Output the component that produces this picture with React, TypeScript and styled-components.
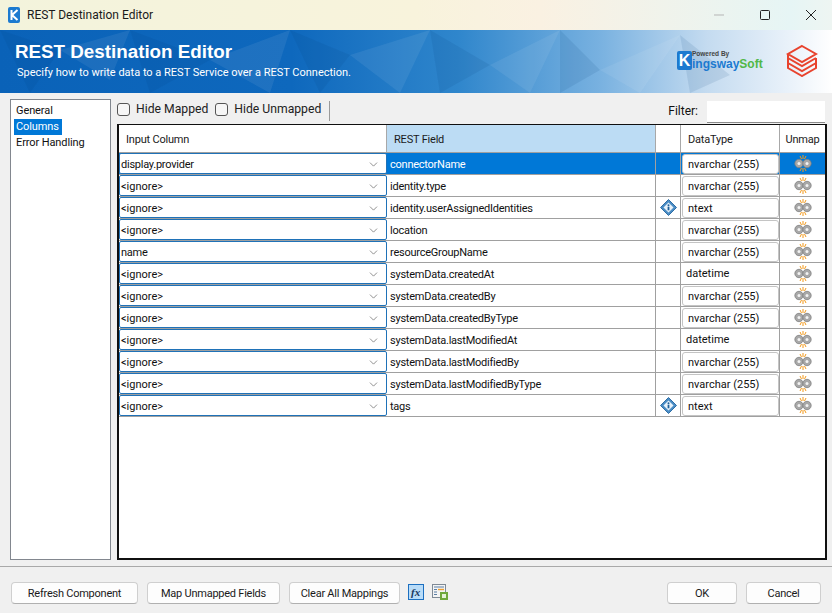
import React from "react";
import styled, { createGlobalStyle } from "styled-components";
import { ChevronDown } from "lucide-react";

const GlobalStyle = createGlobalStyle`
  html, body {
    margin: 0;
    padding: 0;
    background: #f0f0f0;
  }
  * {
    box-sizing: border-box;
  }
`;

const COLUMNS = "268px 269px 25px 99px 46px";

const Window = styled.div`
  width: 832px;
  height: 613px;
  display: flex;
  flex-direction: column;
  overflow: hidden;
  font-family: Roboto, "Liberation Sans", sans-serif;
  font-size: 11px;
  color: #111;
  background: #f0f0f0;
`;

const TitleBar = styled.div`
  height: 30px;
  flex: none;
  display: flex;
  align-items: center;
  padding-left: 7px;
  background: linear-gradient(90deg, #f3f3dc 0%, #f8f3dc 50%, #faf1e2 65%, #e6f5f5 95%, #eef5f2 100%);
`;

const TitleText = styled.span`
  margin-left: 5px;
  font-size: 12px;
  color: #1a1a1a;
`;

const WindowButtons = styled.div`
  margin-left: auto;
  margin-right: -2px;
  display: flex;
  align-items: center;
`;

const WindowButton = styled.div`
  width: 46px;
  height: 30px;
  display: flex;
  align-items: center;
  justify-content: center;
`;

const Banner = styled.div`
  height: 63px;
  flex: none;
  position: relative;
  overflow: hidden;
  background: linear-gradient(90deg, #0a62b8 0%, #0e68bd 35%, #2f86cc 55%, #78b1e0 72%, #c4dbf0 85%, #eaf2fa 95%, #ffffff 100%);
`;

const BannerTexture = styled.svg`
  position: absolute;
  inset: 0;
`;

const BannerText = styled.div`
  position: relative;
  padding: 11px 0 0 15px;
  color: #fff;
`;

const BannerTitle = styled.div`
  font-family: "Liberation Sans", Arial, sans-serif;
  font-size: 18.8px;
  font-weight: 700;
  line-height: 21px;
`;

const BannerSub = styled.div`
  margin: 3px 0 0 2px;
  font-size: 11px;
  line-height: 15px;
`;

const BannerLogos = styled.div`
  position: absolute;
  top: 14px;
  left: 677px;
  display: flex;
  align-items: center;
  gap: 23px;
`;

const KingswayLogo = styled.div`
  width: 86px;
  height: 27px;
  position: relative;
  display: flex;
  align-items: flex-end;
`;

const KBadge = styled.div`
  width: 15px;
  height: 19px;
  background: #1c7ad0;
  border-radius: 2px;
  color: #fff;
  font: 700 16px/19px "Liberation Sans", sans-serif;
  text-align: center;
  position: absolute;
  left: 0;
  top: 4px;
`;

const PoweredBy = styled.span`
  position: absolute;
  left: 15px;
  top: 3px;
  font: 700 6.5px/8px "Liberation Sans", sans-serif;
  color: #444;
`;

const KingswayName = styled.span`
  position: absolute;
  left: 15px;
  top: 10px;
  font: 700 12px/14px "Liberation Sans", sans-serif;
  color: #1c7ad0;
  white-space: nowrap;

  b {
    color: #52b848;
  }
`;

const Body = styled.div`
  flex: 1;
  display: flex;
  gap: 6px;
  padding: 6px 5px 6px 10px;
  border-bottom: 1px solid #a9a9a9;
`;

const TabList = styled.div`
  width: 101px;
  flex: none;
  background: #fff;
  border: 1px solid #82878f;
  padding: 3px 3px;
  display: flex;
  flex-direction: column;
  align-items: flex-start;
`;

const TabItem = styled.div<{ $active?: boolean }>`
  height: 16px;
  line-height: 15px;
  padding: 0 3px 0 2px;
  letter-spacing: -0.1px;
  background: ${(p) => (p.$active ? "#0078d7" : "transparent")};
  color: ${(p) => (p.$active ? "#fff" : "#111")};
`;

const MainPane = styled.div`
  flex: 1;
  min-width: 0;
  display: flex;
  flex-direction: column;
`;

const Toolbar = styled.div`
  height: 25px;
  flex: none;
  display: flex;
  align-items: flex-start;
`;

const CheckLabel = styled.label`
  height: 20px;
  display: flex;
  align-items: center;
  gap: 6px;
  margin-right: 7px;
  font-size: 12.2px;
  color: #222;
`;

const CheckBox = styled.span`
  width: 13px;
  height: 13px;
  border: 1px solid #555;
  border-radius: 3px;
  background: #f6f6f6;
`;

const ToolbarDivider = styled.div`
  width: 1px;
  height: 20px;
  margin: 2px 0 0 1px;
  background: #9a9a9a;
`;

const FilterLabel = styled.span`
  margin: 5px 9px 0 auto;
  font-size: 12px;
`;

const FilterInput = styled.div`
  width: 118px;
  height: 22px;
  margin: 2px 2px 0 0;
  background: #fff;
  border-bottom: 1px solid #8a8a8a;
`;

const Grid = styled.div`
  flex: 1;
  background: #fff;
  border: 2px solid #101010;
  border-top-width: 1px;
  overflow: hidden;
`;

const HeaderRow = styled.div`
  height: 28px;
  display: grid;
  grid-template-columns: ${COLUMNS};
  border-bottom: 1px solid #a0a0a0;
`;

const HeaderCell = styled.div<{ $selected?: boolean; $center?: boolean }>`
  display: flex;
  align-items: center;
  justify-content: ${(p) => (p.$center ? "center" : "flex-start")};
  padding: 1px ${(p) => (p.$center ? "1px" : "0")} 0 ${(p) => (p.$center ? "0" : "7px")};
  background: ${(p) => (p.$selected ? "#bcdcf4" : "#fff")};
  border-right: 1px solid #a8a8a8;
  letter-spacing: -0.2px;
  color: #1a1a1a;

  &:last-child {
    border-right: 0;
  }
`;

const Row = styled.div<{ $selected?: boolean }>`
  height: 22px;
  display: grid;
  grid-template-columns: ${COLUMNS};
  border-bottom: 1px solid #a0a0a0;
  background: ${(p) => (p.$selected ? "#0078d7" : "#fff")};
  color: ${(p) => (p.$selected ? "#fff" : "#111")};
`;

const Cell = styled.div`
  display: flex;
  align-items: center;
  justify-content: center;
  border-right: 1px solid #a0a0a0;
  min-width: 0;

  &:last-child {
    border-right: 0;
  }
`;

const ComboCell = styled.div`
  display: flex;
  align-items: center;
  justify-content: space-between;
  padding: 1px 6px 0 1px;
  background: #fff;
  color: #111;
  border: 1px solid #1f72b8;
  border-radius: 2px;
`;

const ComboText = styled.span<{ $tight?: boolean }>`
  letter-spacing: ${(p) => (p.$tight ? "-0.24px" : "0")};
`;

const FieldCell = styled.div`
  display: flex;
  align-items: center;
  padding: 1px 0 0 3px;
  letter-spacing: -0.24px;
  border-right: 1px solid #a0a0a0;
`;

const TypeCell = styled.div`
  display: flex;
  align-items: center;
  padding-left: 5px;
  border-right: 1px solid #a0a0a0;
  color: #111;
`;

const TypeBox = styled.div`
  width: 97px;
  height: 20px;
  margin-left: -4px;
  padding: 1px 0 0 5px;
  display: flex;
  align-items: center;
  background: #fff;
  color: #111;
  border: 1px solid #c4c4c4;
  border-radius: 3px;
`;

const Footer = styled.div`
  height: 46px;
  flex: none;
  display: flex;
  align-items: flex-start;
  padding: 15px 11px 0 11px;
`;

const FooterButton = styled.button<{ $width: number; $last?: boolean }>`
  width: ${(p) => p.$width}px;
  height: 22px;
  margin-right: ${(p) => (p.$last ? "0" : "9px")};
  padding: 0;
  background: #fdfdfd;
  border: 1px solid #cfcfcf;
  border-bottom-color: #b0b0b0;
  border-radius: 4px;
  font-family: inherit;
  font-size: 11px;
  letter-spacing: -0.24px;
  color: #1a1a1a;
`;

const FooterIcons = styled.div`
  display: flex;
  align-items: center;
  gap: 8px;
  margin: 2px 0 0 -1px;
`;

const FooterEnd = styled.div`
  margin-left: auto;
  display: flex;
`;

function WinIcon() {
  return (
    <svg width="15" height="17" viewBox="0 0 15 17">
      <rect x="1" y="0" width="12" height="16" rx="2" fill="#1c7ad0" />
      <path d="M4.5 3v10M10.5 3 5 8l5.5 5" stroke="#fff" strokeWidth="2" fill="none" />
    </svg>
  );
}

function StackLogo() {
  return (
    <svg width="32" height="33" viewBox="0 0 32 33" fill="none" stroke="#e8432e" strokeWidth="2">
      <path d="M16 2 30 10 16 18 2 10Z" />
      <path d="M2 10v4l14 8 14-8" />
      <path d="M2 14v5l14 8 14-8v-5" />
      <path d="M2 19v5l14 8 14-8v-5" />
    </svg>
  );
}

function InfoDiamond() {
  return (
    <svg width="17" height="17" viewBox="0 0 17 17">
      <path d="M8.5.5 16.5 8.5 8.5 16.5.5 8.5Z" fill="#4a8cc4" stroke="#2f6ea6" />
      <path d="M8.5 3.5 13.5 8.5 8.5 13.5 3.5 8.5Z" fill="#e8f2fa" />
      <circle cx="8.5" cy="6.2" r="1" fill="#1d5f9a" />
      <rect x="7.6" y="7.7" width="1.8" height="3.6" fill="#1d5f9a" />
    </svg>
  );
}

function UnmapIcon() {
  return (
    <svg width="18" height="17" viewBox="0 0 18 17">
      <g stroke="#f39a1c" strokeWidth="1">
        <path d="M9 0v4M6 1l1.5 3M12 1l-1.5 3M9 13v4M6 16l1.5-3M12 16l-1.5-3" />
      </g>
      <circle cx="5" cy="8.5" r="4.2" fill="#a8a8a8" stroke="#7a7a7a" strokeWidth=".7" />
      <circle cx="13" cy="8.5" r="4.2" fill="#a8a8a8" stroke="#7a7a7a" strokeWidth=".7" />
      <circle cx="5" cy="8.5" r="1.5" fill="#f2f2f2" />
      <circle cx="13" cy="8.5" r="1.5" fill="#f2f2f2" />
    </svg>
  );
}

function FxIcon() {
  return (
    <svg width="16" height="16" viewBox="0 0 16 16">
      <rect x=".5" y=".5" width="15" height="15" fill="#b9dcf8" stroke="#1c6fc0" />
      <text x="3" y="12" fontFamily="Liberation Serif, serif" fontStyle="italic" fontWeight="700" fontSize="11" fill="#17375e">
        fx
      </text>
    </svg>
  );
}

function TableIcon() {
  return (
    <svg width="16" height="16" viewBox="0 0 16 16">
      <rect x=".5" y=".5" width="13" height="13" fill="#f4f4f4" stroke="#7f8a96" />
      <path d="M2 3h10M2 5.5h3M2 8h3M2 10.5h3" stroke="#5b7fa6" strokeWidth="1" />
      <path d="M6 5.5h6" stroke="#f0a030" strokeWidth="1.4" />
      <rect x="8" y="8" width="8" height="8" fill="#6fa83c" />
      <rect x="10" y="10" width="4" height="4" fill="#e5f2d8" />
    </svg>
  );
}

const rows = [
  { input: "display.provider", field: "connectorName", type: "nvarchar (255)", selected: true },
  { input: "<ignore>", field: "identity.type", type: "nvarchar (255)" },
  { input: "<ignore>", field: "identity.userAssignedIdentities", type: "ntext", info: true },
  { input: "<ignore>", field: "location", type: "nvarchar (255)" },
  { input: "name", field: "resourceGroupName", type: "nvarchar (255)" },
  { input: "<ignore>", field: "systemData.createdAt", type: "datetime", plain: true },
  { input: "<ignore>", field: "systemData.createdBy", type: "nvarchar (255)" },
  { input: "<ignore>", field: "systemData.createdByType", type: "nvarchar (255)" },
  { input: "<ignore>", field: "systemData.lastModifiedAt", type: "datetime", plain: true },
  { input: "<ignore>", field: "systemData.lastModifiedBy", type: "nvarchar (255)" },
  { input: "<ignore>", field: "systemData.lastModifiedByType", type: "nvarchar (255)" },
  { input: "<ignore>", field: "tags", type: "ntext", info: true },
];

const facets = [
  "0,0 60,20 30,63", "60,20 130,0 110,50", "130,0 210,30 150,63", "210,30 290,0 270,63",
  "290,0 350,25 320,63", "350,25 430,0 400,63", "430,0 490,35 440,63", "490,35 560,0 530,63",
  "560,0 600,40 560,63", "600,40 680,5 640,63", "680,5 730,45 690,63",
];

function App() {
  return (
    <Window>
      <GlobalStyle />
      <TitleBar>
        <WinIcon />
        <TitleText>REST Destination Editor</TitleText>
        <WindowButtons>
          <WindowButton>
            <svg width="10" height="2"><path d="M0 1h10" stroke="#b5b5b5" /></svg>
          </WindowButton>
          <WindowButton>
            <svg width="10" height="10"><rect x=".5" y=".5" width="9" height="9" rx="1" fill="none" stroke="#222" /></svg>
          </WindowButton>
          <WindowButton>
            <svg width="10" height="10"><path d="M0 0l10 10M10 0 0 10" stroke="#222" /></svg>
          </WindowButton>
        </WindowButtons>
      </TitleBar>

      <Banner>
        <BannerTexture width="832" height="63" viewBox="0 0 832 63">
          {facets.map((points, i) => (
            <polygon key={points} points={points} fill={i % 2 ? "#ffffff" : "#003a78"} opacity={i % 2 ? 0.07 : 0.1} />
          ))}
        </BannerTexture>
        <BannerText>
          <BannerTitle>REST Destination Editor</BannerTitle>
          <BannerSub>Specify how to write data to a REST Service over a REST Connection.</BannerSub>
        </BannerText>
        <BannerLogos>
          <KingswayLogo>
            <KBadge>K</KBadge>
            <PoweredBy>Powered By</PoweredBy>
            <KingswayName>
              ingsway<b>Soft</b>
            </KingswayName>
          </KingswayLogo>
          <StackLogo />
        </BannerLogos>
      </Banner>

      <Body>
        <TabList>
          <TabItem>General</TabItem>
          <TabItem $active>Columns</TabItem>
          <TabItem>Error Handling</TabItem>
        </TabList>
        <MainPane>
          <Toolbar>
            <CheckLabel>
              <CheckBox />
              Hide Mapped
            </CheckLabel>
            <CheckLabel>
              <CheckBox />
              Hide Unmapped
            </CheckLabel>
            <ToolbarDivider />
            <FilterLabel>Filter:</FilterLabel>
            <FilterInput />
          </Toolbar>
          <Grid>
            <HeaderRow>
              <HeaderCell>Input Column</HeaderCell>
              <HeaderCell $selected>REST Field</HeaderCell>
              <HeaderCell />
              <HeaderCell>DataType</HeaderCell>
              <HeaderCell $center>Unmap</HeaderCell>
            </HeaderRow>
            {rows.map((row) => (
              <Row key={row.field} $selected={row.selected}>
                <ComboCell>
                  <ComboText $tight={row.input !== "<ignore>"}>{row.input}</ComboText>
                  <ChevronDown size={13} strokeWidth={1.2} color="#555" />
                </ComboCell>
                <FieldCell>{row.field}</FieldCell>
                <Cell>{row.info && <InfoDiamond />}</Cell>
                <TypeCell>{row.plain ? row.type : <TypeBox>{row.type}</TypeBox>}</TypeCell>
                <Cell>
                  <UnmapIcon />
                </Cell>
              </Row>
            ))}
          </Grid>
        </MainPane>
      </Body>

      <Footer>
        <FooterButton $width={127}>Refresh Component</FooterButton>
        <FooterButton $width={133}>Map Unmapped Fields</FooterButton>
        <FooterButton $width={111}>Clear All Mappings</FooterButton>
        <FooterIcons>
          <FxIcon />
          <TableIcon />
        </FooterIcons>
        <FooterEnd>
          <FooterButton $width={70}>OK</FooterButton>
          <FooterButton $width={75} $last>
            Cancel
          </FooterButton>
        </FooterEnd>
      </Footer>
    </Window>
  );
}

export default App;
